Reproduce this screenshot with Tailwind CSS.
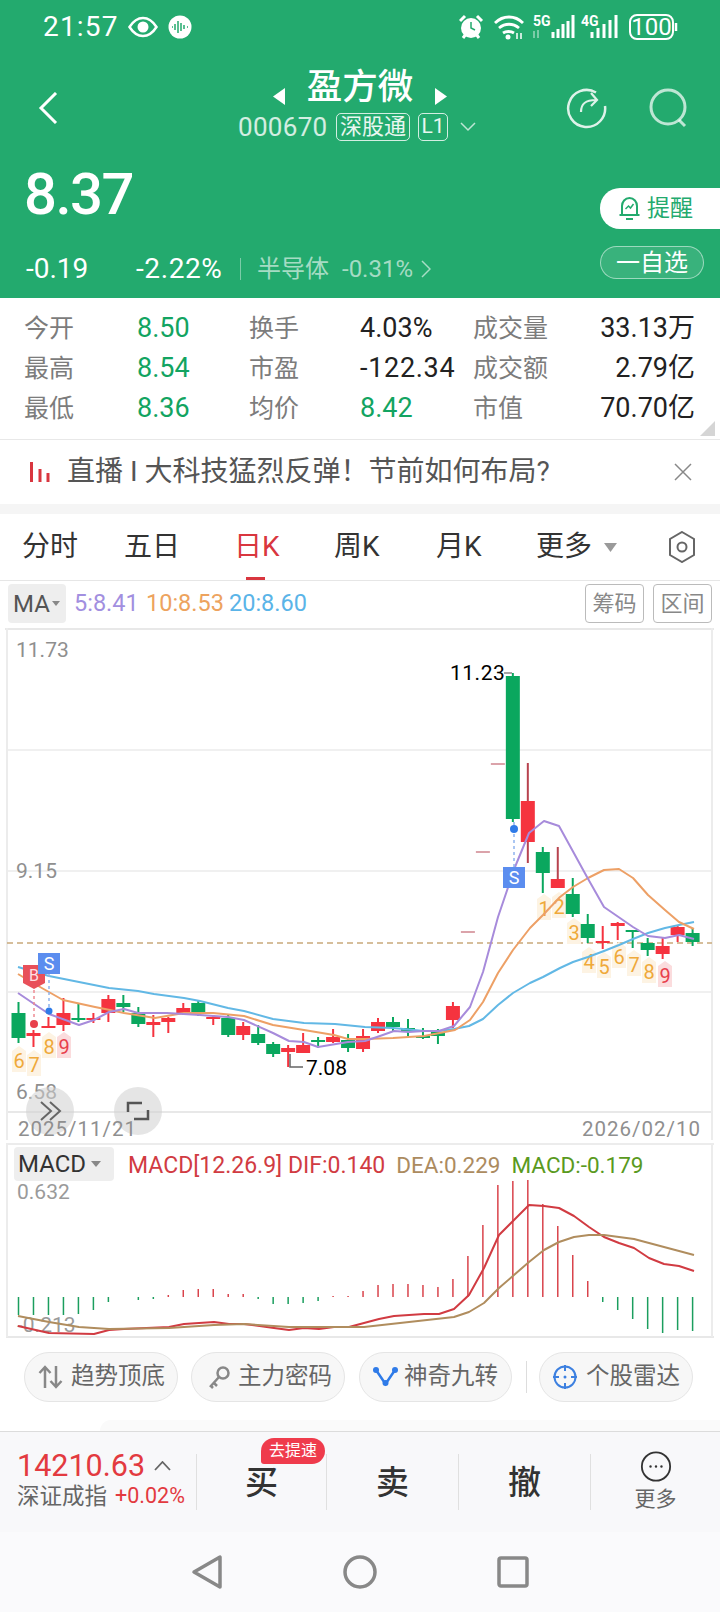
<!DOCTYPE html>
<html lang="zh-CN">
<head>
  <meta charset="UTF-8">
  <meta name="viewport" content="width=device-width, initial-scale=1.0">
  <title>盈方微</title>
  <script src="https://cdn.jsdelivr.net/npm/@tailwindcss/browser@4"></script>
</head>
<body class="[font-family:Roboto,'Noto_Sans_CJK_SC',sans-serif]">
  <div class="w-[720px] h-[1612px] overflow-hidden bg-white flex flex-col">

    <!-- green header -->
    <header class="h-[298px] bg-[#23aa6e] text-white flex flex-col">
      <div class="h-[54px] flex items-center justify-between pl-[43px] pr-[40px]">
        <div class="flex items-center">
          <span class="text-[28px] leading-none w-[85px] tracking-[1.2px]">21:57</span>
          <svg width="30" height="22" viewBox="0 0 30 22" fill="none">
            <path d="M1.5 11C6 4 10.500 2 15 2s9 2 13.500 9C24 18 19.500 20 15 20S6 18 1.500 11z" stroke="#fff" stroke-width="2.500"/>
            <circle cx="15" cy="11" r="5.500" fill="#fff"/>
          </svg>
          <svg class="ml-[10px]" width="24" height="24" viewBox="0 0 24 24">
            <circle cx="12" cy="12" r="11.500" fill="#fff"/>
            <path d="M4 12h1M7 9v6M10 6v12M13 8v8M16 10v4M19 12h1" stroke="#23aa6e" stroke-width="1.500"/>
          </svg>
        </div>
        <svg width="221" height="28" viewBox="459 13 221 28" fill="none">
          <circle cx="471" cy="28" r="10" fill="#fff"/>
          <path d="M471 22v6l4 2" stroke="#23aa6e" stroke-width="1.500"/>
          <path d="M460 21l5-5M482 21l-5-5M463 38l3-4M479 38l-3-4" stroke="#fff" stroke-width="3"/>
          <path d="M495 23c8-8 20-8 28 0M499 28c6-5 14-5 20 0M503 33c3-2 8-2 11 0" stroke="#fff" stroke-width="2.800"/>
          <circle cx="508" cy="37" r="2.500" fill="#fff"/>
          <path d="M517 33v6M521 39v-6" stroke="#fff" stroke-width="1.500"/>
          <text x="533" y="26" font-size="14" font-weight="700" fill="#fff">5G</text>
          <path d="M534 31v7M538 30v8" stroke="#fff" stroke-opacity="0.400" stroke-width="2"/>
          <path d="M553 38v-6M558 38v-9M563 38v-14M568 38v-17M573 38v-23" stroke="#fff" stroke-width="3"/>
          <text x="581" y="26" font-size="14" font-weight="700" fill="#fff">4G</text>
          <path d="M592 38v-6M598 38v-10M604 38v-14M610 38v-18M616 38v-23" stroke="#fff" stroke-width="3"/>
          <rect x="630" y="15" width="43" height="24" rx="7" stroke="#fff" stroke-width="2"/>
          <path d="M676 23v8" stroke="#fff" stroke-width="2.500"/>
          <text x="651.500" y="35" text-anchor="middle" font-size="24" fill="#fff">100</text>
        </svg>
      </div>

      <div class="h-[92px] grid grid-cols-[1fr_auto_1fr]">
        <div class="pl-[38px] pt-[38px]">
          <svg width="20" height="32" viewBox="0 0 20 32" fill="none"><path d="M18 1L3 16l15 15" stroke="#fff" stroke-width="3"/></svg>
        </div>
        <div class="flex flex-col items-center pt-[13px]">
          <div class="flex items-start gap-[21px]">
            <svg class="mt-[21px]" width="13" height="17" viewBox="0 0 13 17"><path d="M12 0v17L0 8.500z" fill="#fff"/></svg>
            <span class="text-[35.500px] leading-[40px] font-medium">盈方微</span>
            <svg class="mt-[21px]" width="13" height="17" viewBox="0 0 13 17"><path d="M1 0v17L13 8.500z" fill="#fff"/></svg>
          </div>
          <div class="flex items-center mt-[6px] -ml-[6px] text-white/80">
            <span class="text-[26px] leading-[28px] w-[98px] tracking-[0.3px]">000670</span>
            <span class="h-[28px] w-[74px] border border-white/80 rounded-[5px] text-[22px] leading-[25px] text-center text-white/90">深股通</span>
            <span class="h-[28px] w-[30px] ml-[8px] border border-white/80 rounded-[5px] text-[21px] leading-[25px] text-center text-white/90">L1</span>
            <svg class="ml-[12px]" width="16" height="10" viewBox="0 0 16 10" fill="none"><path d="M1 1l7 7 7-7" stroke="#fff" stroke-opacity="0.700" stroke-width="1.500"/></svg>
          </div>
        </div>
        <div class="flex justify-end pr-[30px] pt-[33px] gap-[40px]">
          <svg width="42" height="42" viewBox="0 0 42 42" fill="none" stroke="#fff" stroke-opacity="0.850" stroke-width="2.500">
            <path d="M30 5.500A18.500 18.500 0 1 0 39 19"/>
            <path d="M15 25c0-8 4-12 15-12M25 6l6 7-6 6" stroke-width="2.200"/>
          </svg>
          <svg width="42" height="42" viewBox="0 0 42 42" fill="none" stroke="#fff" stroke-opacity="0.700" stroke-width="3">
            <circle cx="20" cy="20" r="17"/>
            <path d="M31 33l6 6"/>
          </svg>
        </div>
      </div>

      <div class="flex-1 flex justify-between">
        <div class="pl-[24px] pt-[19px]">
          <div class="text-[58px] leading-[58px] font-medium tracking-[-1.500px]">8.37</div>
          <div class="flex items-center h-[30px] mt-[31px] pl-[2px]">
            <span class="w-[110px] text-[28px]">-0.19</span>
            <span class="w-[104px] text-[28px] tracking-[0.6px]">-2.22%</span>
            <span class="w-px h-[22px] bg-white/40"></span>
            <span class="ml-[16px] text-[24px] text-white/60">半导体</span>
            <span class="ml-[13px] text-[24px] text-white/60">-0.31%</span>
            <svg class="ml-[8px]" width="10" height="18" viewBox="0 0 10 18" fill="none"><path d="M1 1l8 8-8 8" stroke="#fff" stroke-opacity="0.600" stroke-width="1.500"/></svg>
          </div>
        </div>
        <div class="w-[120px] pt-[42px] flex flex-col gap-[17px]">
          <div class="h-[41px] bg-white rounded-l-[20px] flex items-center pl-[18px] gap-[6px] text-[#23aa6e] text-[23px] leading-none">
            <svg width="23" height="26" viewBox="0 0 23 26" fill="none" stroke="#23aa6e" stroke-width="2">
              <path d="M4 19V10c0-4 3-8 7.500-8S19 6 19 10v9M1.500 19h20M8 23h7"/>
              <path d="M7.500 13l3-3 2 2 3-4" stroke-width="1.500"/>
            </svg>
            提醒
          </div>
          <div class="h-[33px] w-[104px] border border-white/50 bg-white/10 rounded-full flex items-center justify-center text-[24px] leading-none">一自选</div>
        </div>
      </div>
    </header>

    <!-- quote table -->
    <section class="relative h-[142px] pt-[10px] pl-[24px] pr-[25px] border-b border-[#e8e8e8] text-[#222] text-[27px]">
      <div class="grid grid-cols-[113px_112px_111px_113px_84px_1fr] h-[40px] items-center leading-none whitespace-nowrap">
        <span class="text-[25px] text-[#7c7c7c]">今开</span><span class="text-[#12a461]">8.50</span>
        <span class="text-[25px] text-[#7c7c7c]">换手</span><span>4.03%</span>
        <span class="text-[25px] text-[#7c7c7c]">成交量</span><span class="text-right">33.13万</span>
      </div>
      <div class="grid grid-cols-[113px_112px_111px_113px_84px_1fr] h-[40px] items-center leading-none whitespace-nowrap">
        <span class="text-[25px] text-[#7c7c7c]">最高</span><span class="text-[#12a461]">8.54</span>
        <span class="text-[25px] text-[#7c7c7c]">市盈</span><span class="tracking-[0.7px]">-122.34</span>
        <span class="text-[25px] text-[#7c7c7c]">成交额</span><span class="text-right">2.79亿</span>
      </div>
      <div class="grid grid-cols-[113px_112px_111px_113px_84px_1fr] h-[40px] items-center leading-none whitespace-nowrap">
        <span class="text-[25px] text-[#7c7c7c]">最低</span><span class="text-[#12a461]">8.36</span>
        <span class="text-[25px] text-[#7c7c7c]">均价</span><span class="text-[#12a461]">8.42</span>
        <span class="text-[25px] text-[#7c7c7c]">市值</span><span class="text-right">70.70亿</span>
      </div>
      <svg class="absolute right-[5px] bottom-[3px]" width="15" height="15" viewBox="0 0 15 15"><path d="M15 0v15H0z" fill="#d5d5d5"/></svg>
    </section>

    <!-- news strip -->
    <section class="h-[64px] flex items-center pl-[30px] pr-[28px] text-[28px] text-[#555]">
      <svg width="20" height="20" viewBox="0 0 20 20" class="mr-[17px]"><path d="M1.500 0v20M10 7v13M18 11v9" stroke="#d9363f" stroke-width="3"/></svg>
      <span class="flex-1 whitespace-nowrap">直播 I 大科技猛烈反弹！节前如何布局?</span>
      <svg width="18" height="18" viewBox="0 0 18 18" fill="none"><path d="M1 1l16 16M17 1L1 17" stroke="#888" stroke-width="1.500"/></svg>
    </section>
    <div class="h-[10px] bg-[#f5f5f5]"></div>

    <!-- period tabs -->
    <nav class="h-[67px] flex items-center pl-[22px] border-b border-[#e6e6e6] text-[28px] text-[#333]">
      <span class="w-[102px]">分时</span>
      <span class="w-[110px]">五日</span>
      <span class="relative w-[100px] h-full flex items-center text-[#d9363f]">日K<i class="absolute left-[12px] bottom-0 w-[19px] h-[3px] bg-[#d9363f]"></i></span>
      <span class="w-[102px]">周K</span>
      <span class="w-[100px]">月K</span>
      <span class="w-[132px] flex items-center gap-[12px]">更多<svg width="13" height="9" viewBox="0 0 13 9"><path d="M0 0h13L6.500 9z" fill="#9a9a9a"/></svg></span>
      <svg width="28" height="32" viewBox="0 0 28 32" fill="none" stroke="#666" stroke-width="2">
        <path d="M14 1l12 7v16l-12 7-12-7V8z"/>
        <circle cx="14" cy="16" r="4.500"/>
      </svg>
    </nav>

    <!-- MA legend -->
    <div class="h-[47px] flex items-start pt-[3px] pl-[8px] pr-[8px]">
      <div class="h-[39px] w-[58px] bg-[#eeeeee] rounded-[4px] flex items-center pl-[5px] gap-[2px] text-[24px] text-[#555] leading-none">
        MA<svg width="8" height="5" viewBox="0 0 8 5"><path d="M0 0h8L4 5z" fill="#888"/></svg>
      </div>
      <div class="flex items-center h-[39px] ml-[8px] text-[23.500px] leading-none">
        <span class="w-[72px] text-[#a28fe0]">5:8.41</span>
        <span class="w-[83px] text-[#eda35e]">10:8.53</span>
        <span class="text-[#5ab4e8]">20:8.60</span>
      </div>
      <div class="ml-auto flex gap-[9px] text-[22px] text-[#888] leading-none">
        <span class="h-[39px] w-[59px] border border-[#bbb] rounded-[4px] flex items-center justify-center">筹码</span>
        <span class="h-[39px] w-[59px] border border-[#bbb] rounded-[4px] flex items-center justify-center">区间</span>
      </div>
    </div>

    <!-- k-line chart, coordinates are page pixels -->
    <svg id="kline" class="block h-[512px] w-[720px]" viewBox="0 628 720 512"></svg>

    <!-- macd panel -->
    <section class="relative h-[205px]">
      <svg id="macd" class="absolute inset-0 h-[205px] w-[720px]" viewBox="0 1140 720 205"></svg>
      <div class="relative flex items-start pl-[14px] pt-[7px] text-[22.500px] leading-none">
        <div class="h-[34px] w-[100px] bg-[#eeeeee] rounded-[4px] flex items-center pl-[4px] gap-[5px] text-[24px] text-[#333]">
          MACD<svg width="10" height="6" viewBox="0 0 10 6"><path d="M0 0h10L5 6z" fill="#888"/></svg>
        </div>
        <div class="h-[36px] flex items-center ml-[14px] whitespace-nowrap">
          <span class="text-[23px] text-[#d13b42]">MACD[12.26.9] DIF:0.140</span>
          <span class="ml-[11px] text-[#ac8b5f]">DEA:0.229</span>
          <span class="ml-[11px] text-[#5a9a1e]">MACD:-0.179</span>
        </div>
      </div>
    </section>

    <!-- feature pills -->
    <section class="relative h-[86px] pt-[7px] pl-[24px] flex items-start text-[23.500px] text-[#666] leading-none">
      <div class="w-[154px] h-[50px] bg-[#f7f7f7] border border-[#e5e5e5] rounded-full flex items-center pl-[13px] gap-[8px] whitespace-nowrap">
        <svg width="25" height="24" viewBox="0 0 25 24" fill="none" stroke="#888" stroke-width="2.500"><path d="M7 23V3M1.500 8L7 2l5.500 6M18 1v20M12.500 16l5.500 6 5.500-6"/></svg>
        趋势顶底
      </div>
      <div class="ml-[13px] w-[154px] h-[50px] bg-[#f7f7f7] border border-[#e5e5e5] rounded-full flex items-center pl-[16px] gap-[8px] whitespace-nowrap">
        <svg width="22" height="24" viewBox="0 0 22 24" fill="none" stroke="#888" stroke-width="2.500"><circle cx="15" cy="8" r="5.500"/><path d="M11 12L2 22M6 18l3 3M3 21l2 2"/></svg>
        主力密码
      </div>
      <div class="ml-[14px] w-[153px] h-[50px] bg-[#f7f7f7] border border-[#e5e5e5] rounded-full flex items-center pl-[13px] gap-[6px] whitespace-nowrap">
        <svg width="25" height="20" viewBox="0 0 25 20" fill="none"><path d="M3 3l9.500 14L22 3" stroke="#2f7be8" stroke-width="2.500"/><circle cx="3" cy="3" r="3" fill="#2f7be8"/><circle cx="22" cy="3" r="3" fill="#2f7be8"/><circle cx="12.500" cy="16" r="3" fill="#2f7be8"/></svg>
        神奇九转
      </div>
      <span class="ml-[14px] mt-[9px] w-px h-[32px] bg-[#ddd]"></span>
      <div class="ml-[12px] w-[154px] h-[50px] bg-[#f7f7f7] border border-[#e5e5e5] rounded-full flex items-center pl-[13px] gap-[9px] whitespace-nowrap">
        <svg width="24" height="24" viewBox="0 0 24 24" fill="none" stroke="#3d80e0" stroke-width="2"><circle cx="12" cy="12" r="10.500"/><path d="M12 0v6M12 18v6M0 12h6M18 12h6"/><circle cx="12" cy="12" r="1.500" fill="#3d80e0" stroke="none"/></svg>
        个股雷达
      </div>
      <div class="absolute left-[100px] right-0 bottom-0 h-[11px] bg-[#fafafa] rounded-tl-[12px]"></div>
    </section>

    <!-- trade bar -->
    <footer class="h-[101px] bg-[#f8f8fa] border-t border-[#dcdcdc] pt-[22px] flex items-start text-[33px] text-[#333] leading-none">
      <div class="w-[196px] pl-[17px] -mt-[5px]">
        <div class="h-[34px] flex items-center gap-[9px] text-[30.500px] text-[#e33a40]">
          14210.63
          <svg width="17" height="10" viewBox="0 0 17 10" fill="none"><path d="M1 9l7.500-8L16 9" stroke="#666" stroke-width="1.800"/></svg>
        </div>
        <div class="h-[26px] flex items-center gap-[8px] whitespace-nowrap">
          <span class="text-[22.500px] text-[#666]">深证成指</span><span class="text-[21.500px] text-[#e33a40]">+0.02%</span>
        </div>
      </div>
      <div class="relative w-[130px] h-[56px] border-l border-[#e0e0e0] flex items-center justify-center font-medium">买
        <span class="absolute left-[64px] -top-[16px] w-[64px] h-[26px] bg-[#ef3b4c] rounded-[13px] rounded-bl-[3px] text-[16px] text-white font-normal flex items-center justify-center">去提速</span>
      </div>
      <div class="w-[132px] h-[56px] border-l border-[#e0e0e0] flex items-center justify-center font-medium">卖</div>
      <div class="w-[132px] h-[56px] border-l border-[#e0e0e0] flex items-center justify-center font-medium">撤</div>
      <div class="w-[130px] h-[56px] border-l border-[#e0e0e0] flex flex-col items-center">
        <svg class="-mt-[3px]" width="34" height="34" viewBox="0 0 34 34" fill="none"><circle cx="17" cy="17" r="15.500" stroke="#333" stroke-width="2"/><circle cx="11" cy="17" r="1.300" fill="#333"/><circle cx="17" cy="17" r="1.300" fill="#333"/><circle cx="23" cy="17" r="1.300" fill="#333"/></svg>
        <span class="text-[21px] text-[#666] mt-[7px]">更多</span>
      </div>
    </footer>

    <!-- android nav -->
    <div class="h-[80px] bg-[#fafafc] flex items-center justify-center gap-[120px]">
      <svg width="32" height="36" viewBox="0 0 32 36" fill="none"><path d="M29 3v30L3 18z" stroke="#888" stroke-width="3.500" stroke-linejoin="round"/></svg>
      <svg width="34" height="34" viewBox="0 0 34 34" fill="none"><circle cx="17" cy="17" r="15" stroke="#888" stroke-width="3.500"/></svg>
      <svg width="32" height="34" viewBox="0 0 32 34" fill="none"><rect x="2" y="3" width="28" height="28" rx="2" stroke="#888" stroke-width="3.500"/></svg>
    </div>
  </div>

  <script>
    const RED = '#f5333f', GREEN = '#0aa75e';
    const xOf = i => 18.5 + i * 14.98;

    // [index, color, wickTop, bodyTop, bodyBottom, wickBottom]
    const candles = [
      [0,'g',1002,1013,1038,1043],[1,'r',1030,1033,1036,1047],[2,'r',1017,1026,1028,1028],[3,'r',998,1013,1025,1031],
      [4,'g',1003,1018,1020,1022],[5,'r',1013,1018,1020,1023],[6,'r',995,999,1013,1022],[7,'g',995,1003,1007,1012],
      [8,'g',1007,1013,1024,1027],[9,'r',1015,1022,1025,1037],[10,'r',1017,1018,1022,1033],[11,'r',1003,1008,1013,1015],
      [12,'g',1000,1003,1012,1016],[13,'r',1015,1017,1018,1025],[14,'g',1015,1018,1035,1037],[15,'r',1022,1026,1035,1040],
      [16,'g',1025,1034,1043,1045],[17,'g',1042,1044,1054,1057],[18,'r',1045,1048,1052,1067],[19,'r',1033,1045,1053,1053],
      [20,'g',1037,1040,1042,1048],[21,'r',1029,1037,1042,1043],[22,'g',1034,1040,1048,1052],[23,'r',1029,1036,1049,1052],
      [24,'r',1018,1022,1031,1033],[25,'g',1017,1022,1027,1031],[26,'g',1019,1028,1032,1036],[27,'g',1028,1036,1038,1039],
      [28,'g',1029,1032,1036,1044],[29,'r',1002,1006,1020,1028],
      [33,'g',673,676,819,822],[34,'r',763,801,842,863],[35,'g',847,852,873,893],[36,'r',847,879,888,888],
      [37,'g',878,894,914,917],[38,'g',914,924,938,943],[39,'r',926,941,943,949],[40,'r',922,923,926,940],
      [41,'g',930,930,932,948],[42,'g',938,943,950,956],[43,'r',937,946,954,959],[44,'r',925,927,935,942],[45,'g',928,933,942,946]
    ];
    const ma5 = [[18,993],[49,1014],[79,1025],[94,1020],[109,1012],[124,1009],[138,1013],[167,1013],[200,1015],[228,1017],[244,1020],[273,1033],[289,1041],[304,1042],[318,1047],[348,1042],[365,1041],[380,1036],[394,1031],[409,1032],[424,1031],[439,1031],[454,1026],[470,1007],[483,972],[498,917],[515,867],[529,833],[544,821],[559,826],[570,846],[587,877],[604,907],[633,927],[648,936],[665,938],[679,935],[694,939]];
    const ma10 = [[18,974],[33,983],[63,1000],[95,1007],[110,1010],[124,1013],[155,1018],[184,1013],[213,1013],[244,1016],[273,1025],[304,1030],[334,1035],[348,1039],[365,1039],[393,1038],[424,1036],[455,1030],[470,1020],[483,1002],[498,973],[513,950],[530,928],[543,915],[560,897],[573,887],[588,878],[604,870],[619,869],[633,878],[648,895],[665,910],[679,922],[694,929]];
    const ma20 = [[18,967],[49,976],[79,982],[109,988],[138,991],[154,994],[184,998],[200,1001],[228,1008],[244,1011],[273,1019],[304,1023],[335,1024],[365,1027],[393,1028],[424,1031],[439,1031],[454,1029],[469,1026],[483,1019],[498,1005],[513,993],[530,983],[543,977],[560,968],[573,962],[588,957],[604,951],[619,945],[633,939],[648,933],[665,928],[679,925],[694,922]];

    const poly = (pts, color, w = 2) => `<polyline points="${pts.map(p => p.join(',')).join(' ')}" fill="none" stroke="${color}" stroke-width="${w}" stroke-linejoin="round"/>`;
    const line = (x1, y1, x2, y2, color, w = 2, extra = '') => `<line x1="${x1}" y1="${y1}" x2="${x2}" y2="${y2}" stroke="${color}" stroke-width="${w}" ${extra}/>`;
    const label = (x, y, size, color, text, anchor = 'start') => `<text x="${x}" y="${y}" font-size="${size}" fill="${color}" text-anchor="${anchor}">${text}</text>`;

    function tdMark(x, y, n, pink) {
      const bg = pink ? '#fbdcdd' : '#fdf3e3', fg = pink ? '#e8404c' : '#efa93a';
      return `<path d="M${x-7} ${y-10}L${x} ${y-15}L${x+7} ${y-10}V${y+11}H${x-7}z" fill="${bg}"/>` +
        label(x, y + 7, 20, fg, n, 'middle');
    }

    let k = '';
    // frame and grid
    [750, 871, 992].forEach(y => k += line(7, y, 712, y, '#f0f0f0'));
    k += line(7, 1112, 712, 1112, '#e8e8e8');
    k += line(5, 629, 714, 629, '#e8e8e8', 2);
    k += line(7, 628, 7, 1140, '#ececec', 2) + line(712, 628, 712, 1140, '#ececec', 2);
    k += line(7, 943, 712, 943, '#c9a97b', 1.5, 'stroke-dasharray="6 4"');

    // td marks sit under the candles
    [[19,1061,6],[34,1065,7],[49,1047,8],[544,909,1],[559,907,2],[574,933,3],[589,962,4],[604,967,5],[619,957,6],[634,965,7],[649,972,8]]
      .forEach(m => k += tdMark(m[0], m[1], m[2], false));
    k += tdMark(64, 1047, 9, true) + tdMark(665, 976, 9, true);

    candles.forEach(([i, c, wt, bt, bb, wb]) => {
      const x = xOf(i), color = c === 'r' ? RED : GREEN;
      const wick = (i === 34 || i === 36) ? '#b8434f' : color;
      k += line(x, wt, x, wb, wick);
      k += `<rect x="${x-7}" y="${bt}" width="14" height="${Math.max(bb-bt, 2)}" fill="${color}"/>`;
    });
    // one-line limit-up days
    [[30,932],[31,852],[32,764]].forEach(([i, y]) => k += line(xOf(i)-7, y, xOf(i)+7, y, '#dba3aa'));

    k += poly(ma20, '#62b8e5') + poly(ma10, '#eda066') + poly(ma5, '#a78bdb');

    // buy and sell tags
    k += line(34, 990, 34, 1020, '#ee8a92', 1.5, 'stroke-dasharray="3 3"') + '<circle cx="34" cy="1024" r="4" fill="#e8404c"/>';
    k += '<path d="M23 965h22v18l-11 6-11-6z" fill="#e8505a"/>' + label(34, 981, 16, '#ffdfe1', 'B', 'middle');
    k += line(49, 974, 49, 1008, '#8fb4ee', 1.5, 'stroke-dasharray="3 3"') + '<circle cx="49" cy="1011" r="3.500" fill="#2f7be8"/>';
    k += '<rect x="38" y="953" width="22" height="21" fill="#5b8def"/>' + label(49, 970, 18, '#fff', 'S', 'middle');
    k += line(514, 822, 514, 867, '#8fb4ee', 1.5, 'stroke-dasharray="3 3"') + '<circle cx="514" cy="829" r="4" fill="#2f7be8"/>';
    k += '<rect x="503" y="867" width="22" height="21" fill="#5b8def"/>' + label(514, 884, 18, '#fff', 'S', 'middle');

    // extremes
    k += line(504, 673, 512, 673, '#888', 1.5) + label(450, 680, 21, '#000', '11.23').replace('<text', '<text letter-spacing="0.5"');
    k += '<path d="M290 1054v13h13" fill="none" stroke="#666" stroke-width="1.500"/>' + label(306, 1075, 21, '#000', '7.08');

    // axis labels and overlay buttons
    k += label(16, 657, 21, '#8f8f8f', '11.73') + label(16, 878, 21, '#8f8f8f', '9.15') + label(16, 1099, 21, '#8f8f8f', '6.58');
    k += '<circle cx="50" cy="1111" r="24" fill="#cfcfcf" fill-opacity="0.550"/><path d="M41 1102l10 9-10 9M50 1102l10 9-10 9" fill="none" stroke="#666" stroke-width="2"/>';
    k += '<circle cx="138" cy="1111" r="24" fill="#cfcfcf" fill-opacity="0.550"/><path d="M128 1112v-9h14M148 1110v9h-14" fill="none" stroke="#555" stroke-width="2.500"/>';
    k += label(18, 1136, 20.5, '#8f8f8f', '2025/11/21').replace('<text', '<text letter-spacing="1"');
    k += label(701, 1136, 20.5, '#8f8f8f', '2026/02/10', 'end').replace('<text', '<text letter-spacing="1"');
    document.getElementById('kline').innerHTML = k;

    // macd histogram in px off the zero axis, one per day
    const hist = [-18,-18,-18,-18,-17,-13,-5,0,-3,-2,2,7,8,8,3,3,-2,-7,-7,-6,-4,1,1,6,12,13,13,12,10,18,41,72,112,116,117,93,71,42,16,-5,-13,-22,-32,-36,-33,-34];
    const dif = [[18,1326],[49,1333],[94,1334],[109,1330],[124,1329],[169,1327],[184,1324],[199,1323],[214,1322],[229,1324],[244,1324],[274,1328],[289,1330],[304,1328],[319,1329],[334,1327],[349,1327],[364,1323],[379,1319],[394,1316],[409,1315],[424,1314],[439,1314],[454,1309],[469,1295],[484,1268],[499,1235],[514,1220],[529,1205],[544,1206],[559,1208],[574,1216],[589,1227],[604,1237],[619,1243],[634,1248],[649,1258],[664,1264],[679,1266],[694,1271]];
    const dea = [[18,1316],[49,1322],[79,1327],[109,1329],[169,1328],[214,1325],[244,1324],[289,1327],[364,1327],[409,1322],[454,1317],[469,1312],[484,1303],[499,1288],[514,1275],[529,1262],[544,1250],[559,1242],[574,1237],[589,1235],[604,1235],[634,1239],[664,1247],[694,1255]];

    let m = '';
    m += line(6, 1144, 714, 1144, '#ececec', 2) + line(6, 1337, 714, 1337, '#e8e8e8', 2);
    m += line(7, 1144, 7, 1337, '#ececec', 2) + line(712, 1144, 712, 1337, '#ececec', 2);
    hist.forEach((h, i) => {
      if (h) m += line(xOf(i), 1297, xOf(i), 1297 - h, h > 0 ? '#d9434b' : '#1b9e5e', 1.5);
    });
    m += label(17, 1199, 21, '#9a9a9a', '0.632') + label(17, 1332, 21, '#9a9a9a', '-0.213');
    m += poly(dif, '#d13b42') + poly(dea, '#b08d5e');
    document.getElementById('macd').innerHTML = m;
  </script>
</body>
</html>
